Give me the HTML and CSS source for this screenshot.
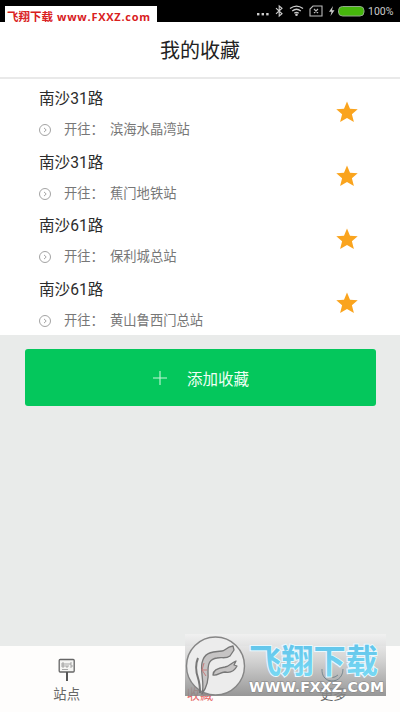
FILE: index.html
```
<!DOCTYPE html>
<html lang="zh-CN">
<head>
<meta charset="utf-8">
<title>我的收藏</title>
<link rel="stylesheet" href="styles.css">
</head>
<body>
<svg class="defs" aria-hidden="true">
  <symbol id="star" viewBox="0 0 22 22"><path d="M11 .6 14 7.8 21.7 8.3 15.9 13.3 17.9 21 11 17 4.1 21 6.1 13.3.3 8.3 8 7.8Z"/></symbol>
  <symbol id="go" viewBox="0 0 12 12"><circle cx="6" cy="6" r="5.5"/><path d="M5 3.9 7.2 6 5 8.1"/></symbol>
</svg>
<div class="screen">
  <div class="status">
    <span class="site-tag"><span class="tag-cn">飞翔下载</span><span class="tag-url">www.FXXZ.com</span></span>
    <svg class="status-icons" viewBox="0 0 110 22">
      <g fill="#ccc"><rect x="1" y="13" width="2.4" height="2.4"/><rect x="5.6" y="13" width="2.4" height="2.4"/><rect x="10.2" y="13" width="2.4" height="2.4"/></g>
      <path d="M20 8.2 26 13.8 23.2 16V6L26 8.2 20 13.8" fill="none" stroke="#ccc" stroke-width="1.1"/>
      <g fill="none" stroke="#ccc" stroke-width="1.3"><path d="M34 8.6Q40.500 3.800 47 8.600M36.200 10.900Q40.500 7.600 44.800 10.900M38.300 13.200Q40.500 11.600 42.700 13.200"/></g>
      <circle cx="40.500" cy="14.800" r="1.300" fill="#ccc"/>
      <path d="M57 6H66V16H54V9ZM58 9 62 13M62 9 58 13" fill="none" stroke="#bbb" stroke-width="1.100"/>
      <path d="M77 6 73 11.800H75.500L74.500 16 78.500 10.300H76Z" fill="#ccc"/>
      <rect x="82.500" y="6.500" width="25.500" height="9.500" rx="4" fill="#46b70c" stroke="#91a98a"/>
    </svg>
    <span class="percent">100%</span>
  </div>
  <header class="title">我的收藏</header>
  <main class="list">
    <div class="row"><div class="info"><div class="route">南沙31路</div><div class="dest"><svg class="go"><use href="#go"/></svg><span class="to">开往：</span><span>滨海水晶湾站</span></div></div><svg class="star"><use href="#star"/></svg></div>
    <div class="row"><div class="info"><div class="route">南沙31路</div><div class="dest"><svg class="go"><use href="#go"/></svg><span class="to">开往：</span><span>蕉门地铁站</span></div></div><svg class="star"><use href="#star"/></svg></div>
    <div class="row"><div class="info"><div class="route">南沙61路</div><div class="dest"><svg class="go"><use href="#go"/></svg><span class="to">开往：</span><span>保利城总站</span></div></div><svg class="star"><use href="#star"/></svg></div>
    <div class="row"><div class="info"><div class="route">南沙61路</div><div class="dest"><svg class="go"><use href="#go"/></svg><span class="to">开往：</span><span>黄山鲁西门总站</span></div></div><svg class="star"><use href="#star"/></svg></div>
  </main>
  <button class="add"><svg class="plus" viewBox="0 0 14 14"><path d="M7 0V14M0 7H14"/></svg><span>添加收藏</span></button>
  <nav class="tabs">
    <div class="tab">
      <svg class="tab-icon" viewBox="0 0 18 24"><rect x="1.200" y="1.500" width="15" height="12.500" rx="1" fill="#f5f5f3" stroke="#666" stroke-width="1.300"/><path d="M4 5V9H6V5H4M4 7H6M8 5V9H10V5M14 5H12V7H14V9H12M4 11.500H10" fill="none" stroke="#888" stroke-width=".7"/><path d="M9 14V23" stroke="#555" stroke-width="2"/></svg>
      <span>站点</span>
    </div>
    <div class="tab active"><span class="tab-icon"></span><span>收藏</span></div>
    <div class="tab"><span class="tab-icon"></span><span>更多</span></div>
  </nav>
  <svg class="watermark" viewBox="0 0 201 62">
    <defs>
      <linearGradient id="shade" x2="0" y2="1"><stop offset="0" stop-color="#f2f2f2" stop-opacity=".8"/><stop offset=".45" stop-color="#c8c8c8" stop-opacity=".85"/><stop offset="1" stop-color="#858585" stop-opacity=".85"/></linearGradient>
      <linearGradient id="sky" x2="0" y2="1"><stop offset="0" stop-color="#5cbfe8"/><stop offset="1" stop-color="#7bdcf5"/></linearGradient>
    </defs>
    <rect width="201" height="62" fill="url(#shade)"/>
    <circle cx="30.500" cy="32" r="29" fill="#ececec" stroke="#858585" stroke-width="1.400"/>
    <g fill="#c6c4c4" stroke="#777" stroke-width="1.300" stroke-linejoin="round">
      <path d="M17 60C20 50 15 38 17 29 19 19 25 18 37 17 40 17 41 13 48 12L49 16 45 22C41 25 37 23 32 24 25 25 23 29 23 37 24 47 22 53 17 60Z"/>
      <path d="M28 41C28 36 32 34 40 33 45 32 46 29 51 27L49 31 52 32C49 38 45 39 40 38 35 38 33 42 28 41Z"/>
      <path d="M13 24C10 31 11 38 13 44 15 50 15 55 15 59" fill="none" stroke-width="2"/>
    </g>
    <path d="M19 29 17 36 21 42M17 36H22" fill="none" stroke="#c77c7c"/>
    <g fill="none" stroke="#536b78" opacity=".65"><path d="M137 35C136 51 158 51 158 35M142 41Q147 46 153 41"/></g>
    <text class="wm-cn" x="64" y="38.500" textLength="129" lengthAdjust="spacingAndGlyphs">飞翔下载</text>
    <text class="wm-url" x="64" y="57.500" textLength="135" lengthAdjust="spacingAndGlyphs">WWW.FXXZ.COM</text>
  </svg>
</div>
</body>
</html>
```
FILE: styles.css
```
* { box-sizing: border-box; }
body {
  margin: 0;
  font-family: Roboto, "Noto Sans CJK SC", sans-serif;
  color: #333;
}
.defs { position: absolute; width: 0; height: 0; }
.screen {
  position: relative;
  display: flex;
  flex-direction: column;
  width: 400px;
  height: 712px;
  overflow: hidden;
  background: #e9ebea;
}
.status {
  display: flex;
  height: 22px;
  padding-left: 5px;
  background: #000;
}
.site-tag {
  display: flex;
  align-items: center;
  width: 152px;
  height: 16px;
  margin-top: 6px;
  padding: 5px 0 0 2px;
  background: #fff;
  color: #d9201d;
  font-weight: bold;
  line-height: 16px;
  white-space: nowrap;
}
.tag-cn { width: 50px; font-size: 11.5px; }
.tag-url { font: bold 11px/16px "Open Sans", sans-serif; letter-spacing: 0.75px; }
.status-icons { width: 110px; height: 22px; margin-left: 99px; }
.percent {
  margin-left: 2px;
  color: #ccc;
  font-size: 10.5px;
  line-height: 23px;
}
.title {
  height: 57px;
  border-bottom: 2px solid #e9e9e9;
  background: #fff;
  color: #222;
  font-size: 20px;
  line-height: 58px;
  text-align: center;
}
.list { height: 256px; padding-top: 3px; background: #fff; }
.row {
  display: flex;
  justify-content: space-between;
  height: 63.7px;
  padding: 5px 42px 0 39px;
}
.route { height: 25px; font-size: 15.6px; line-height: 25px; color: #2b2b2b; }
.dest {
  display: flex;
  align-items: center;
  height: 24px;
  margin-top: 6px;
  color: #777;
  font-size: 13.3px;
  line-height: 24px;
}
.go { width: 12px; height: 12px; margin-right: 13px; fill: none; stroke: #999; stroke-width: 0.9; }
.to { width: 46px; }
.star { width: 22px; height: 22px; margin-top: 14px; fill: #faa41e; }
.add {
  display: flex;
  align-items: center;
  width: 351px;
  height: 57px;
  margin: 14px 0 0 25px;
  padding: 0 0 0 128px;
  border: 0;
  border-radius: 3px;
  background: #04c75c;
  color: #f0fff5;
  font: 15.5px "Noto Sans CJK SC", sans-serif;
}
.plus { width: 14px; height: 14px; margin-right: 20px; stroke: #c5f5d8; stroke-width: 1.1; }
.tabs {
  display: flex;
  height: 66px;
  margin-top: auto;
  background: #fefdfc;
}
.tab {
  display: flex;
  flex: 1;
  flex-direction: column;
  align-items: center;
  padding-top: 12px;
  color: #666;
  font-size: 13.3px;
  line-height: 20px;
}
.tab-icon { height: 24px; width: 22px; margin-bottom: 3px; }
.tab.active { color: #e66b6b; }
.watermark { position: absolute; left: 185px; top: 634px; width: 201px; height: 62px; }
.wm-cn {
  fill: url(#sky);
  stroke: #e9f9ff;
  stroke-width: 2px;
  paint-order: stroke;
  font: bold 33px "Noto Sans CJK SC", sans-serif;
}
.wm-url {
  fill: #fff;
  stroke: #858585;
  stroke-width: 1px;
  paint-order: stroke;
  font: bold 14.5px "DejaVu Sans", sans-serif;
}
```
